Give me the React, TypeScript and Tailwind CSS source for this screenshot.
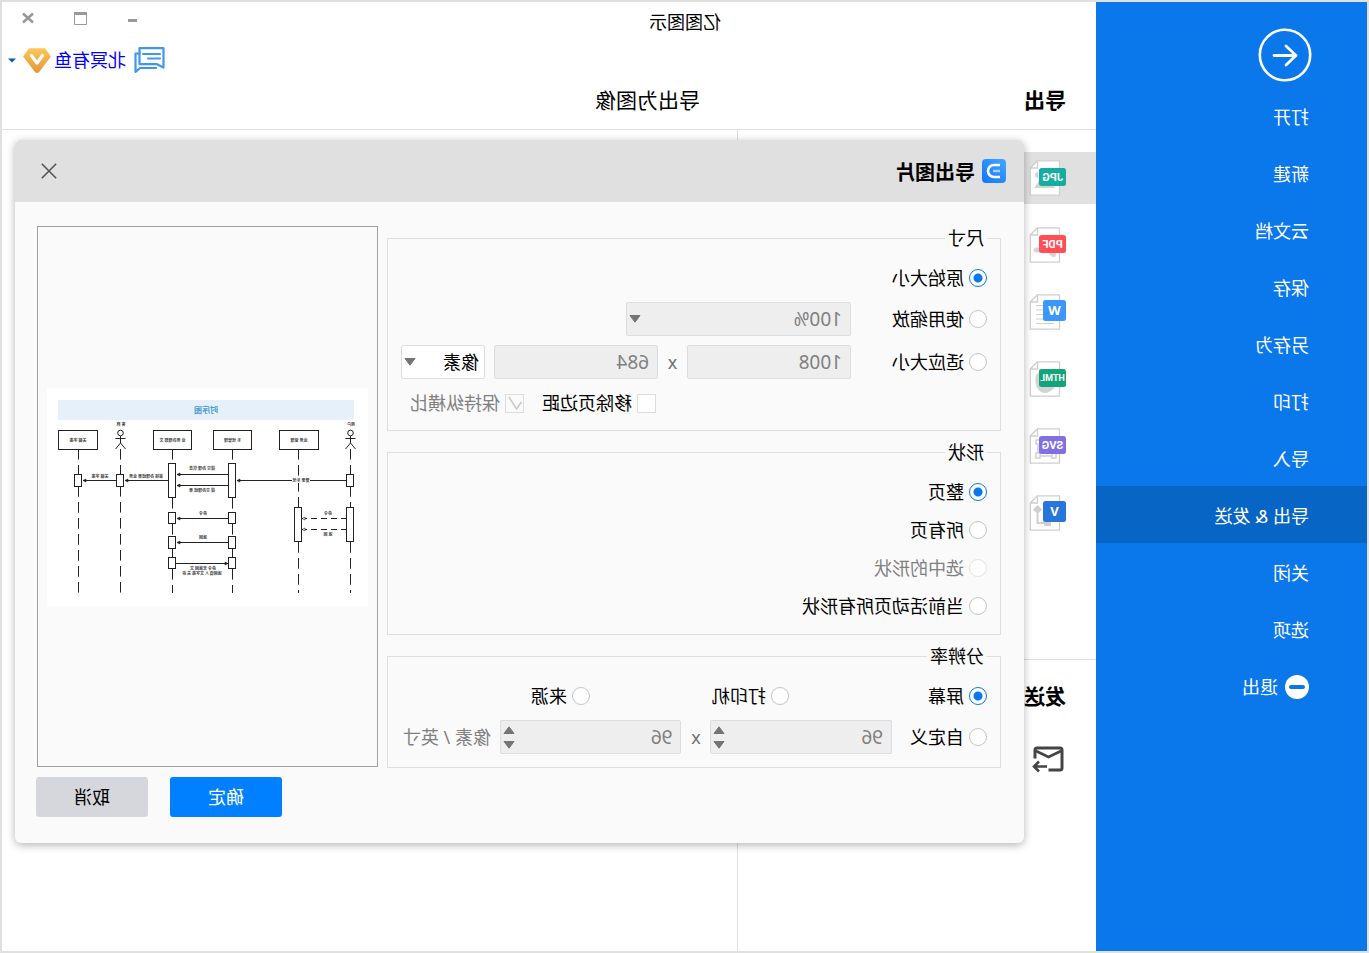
import type { ReactNode } from "react"

const menuItems = ["打开", "新建", "云文档", "保存", "另存为", "打印", "导入", "导出 & 发送", "关闭", "选项"]

interface FormatInfo {
  label: string
  color: string
  wide: boolean
  size: number
}

const formats: FormatInfo[] = [
  { label: "JPG", color: "#13ada1", wide: true, size: 11 },
  { label: "PDF", color: "#ff4e56", wide: true, size: 11 },
  { label: "W", color: "#3b97fb", wide: false, size: 13 },
  { label: "HTML", color: "#11a579", wide: true, size: 9 },
  { label: "SVG", color: "#8170e4", wide: true, size: 11 },
  { label: "V", color: "#2876dc", wide: false, size: 13 },
]

function FormatBackdrop({ label }: { label: string }) {
  switch (label) {
    case "JPG":
      return <path d="M11 28l8-12 4 6 3-3 6 9zM28 12a3 3 0 1 1 0 6z" fill="#d4d4d4" />
    case "PDF":
      return (
        <g fill="#d4d4d4">
          <ellipse cx="29" cy="23" rx="3.500" ry="2.500" />
          <path d="M10 27c0-3 3-5 6-6l2 3c-1 3-3 6-6 6-1 0-2-1-2-3z" />
        </g>
      )
    case "W":
      return <path d="M12 11.500h18M12 16h18M12 20.500h18M12 25h18M12 29.500h18" stroke="#d0d0d0" />
    case "HTML":
      return <path d="M12 22a10 10 0 0 1 18-8c2 8-1 18-9 18-4 0-6-3-9-4z" fill="#d4d4d4" />
    case "SVG":
      return (
        <g fill="none" stroke="#d0d0d0" strokeWidth="1.500">
          <path d="M14 28h12M28 17v9" />
          <rect x="10" y="25" width="4" height="5" fill="#fff" />
          <rect x="26" y="25" width="4" height="5" fill="#fff" />
          <rect x="26" y="12" width="4" height="4" fill="#fff" />
        </g>
      )
    default:
      return <path d="M24 14.500l4.500-4.500 4.500 4.500-4.500 4.500zM27.500 17h2v12h-9v-2h7zM15 25h7v6h-7z" fill="#d0d0d0" />
  }
}

function FormatIcon({ label, color, wide, size }: FormatInfo) {
  return (
    <svg width="37" height="36" viewBox="0 0 37 36" className="block shrink-0">
      <path d="M6.500 .8H28.500l7.200 7.200V35.200H6.500z" fill="#fff" stroke="#d0d0d0" strokeWidth="1.300" strokeLinejoin="round" />
      <path d="M28.500 .8v7.200h7.200" fill="none" stroke="#d0d0d0" strokeWidth="1.300" />
      <FormatBackdrop label={label} />
      <rect x="0" y={wide ? 8 : 6} width={wide ? 27 : 23} height={wide ? 18 : 21} rx="2.500" fill={color} />
      <text
        x={wide ? 13.5 : 11.5}
        y={size === 9 ? 20 : 21}
        textAnchor="middle"
        fontSize={size}
        fontWeight="700"
        fontFamily={wide ? "Roboto, sans-serif" : "'Open Sans', sans-serif"}
        fill="#fff"
      >
        {label}
      </text>
    </svg>
  )
}

function Caret({ up = false }: { up?: boolean }) {
  return (
    <svg width="12" height="8" viewBox="0 0 12 8" className="block">
      <path d={up ? "M1 7.500L6 .8l5 6.700z" : "M1 .5l5 6.700L11 .5z"} fill="#757575" stroke="#757575" strokeLinejoin="round" />
    </svg>
  )
}

interface RadioProps {
  name: string
  children: ReactNode
  checked?: boolean
  disabled?: boolean
  className?: string
}

function Radio({ name, children, checked, disabled, className = "" }: RadioProps) {
  return (
    <label className={`flex h-6 shrink-0 items-center gap-[5px] whitespace-nowrap ${disabled ? "text-[#808080]" : ""} ${className}`}>
      <input
        type="radio"
        name={name}
        defaultChecked={checked}
        disabled={disabled}
        className="size-[18px] appearance-none rounded-full border border-[#c4c4c4] bg-white checked:border-[#0a77eb] checked:bg-[radial-gradient(circle,#0a77eb_4px,#ffffff_5px)] disabled:border-[#e2e2e2]"
      />
      {children}
    </label>
  )
}

function Check({ children, checked, disabled }: { children: ReactNode; checked?: boolean; disabled?: boolean }) {
  return (
    <label className={`flex h-6 items-center gap-[5px] whitespace-nowrap ${disabled ? "text-[#808080]" : ""}`}>
      <span className="relative size-[19px]">
        <input
          type="checkbox"
          defaultChecked={checked}
          disabled={disabled}
          className="block size-[19px] appearance-none border border-[#dcdde0] bg-white disabled:bg-[#fafafa]"
        />
        {checked && (
          <svg width="19" height="19" viewBox="0 0 19 19" className="pointer-events-none absolute inset-0">
            <path d="M2.500 8l5 7L15 3" fill="none" stroke="#c8c8c8" strokeWidth="1.500" />
          </svg>
        )}
      </span>
      {children}
    </label>
  )
}

function Group({ title, children, className = "" }: { title: string; children: ReactNode; className?: string }) {
  return (
    <fieldset className={`min-w-0 border border-[#dedede] px-[13px] ${className}`}>
      <legend className="h-6 px-[3px]">{title}</legend>
      {children}
    </fieldset>
  )
}

const fieldClass =
  "h-[34px] w-full min-w-0 appearance-none rounded-[2px] border border-[#dcdde0] bg-[#eeeeee] pl-2 text-[19px] text-[#808080]"

function Spinner({ label, value }: { label: string; value: string }) {
  return (
    <div className="relative min-w-0 flex-1">
      <input aria-label={label} defaultValue={value} disabled className={fieldClass} />
      <div className="absolute inset-y-0 right-[3px] flex flex-col justify-center gap-[7px]">
        <button type="button" disabled aria-label={`${label} +`}>
          <Caret up />
        </button>
        <button type="button" disabled aria-label={`${label} -`}>
          <Caret />
        </button>
      </div>
    </div>
  )
}

function Times() {
  return <span className="w-[29px] shrink-0 text-center text-[#707070]">x</span>
}

// x and the start/end pairs of every dashed stretch
const lifelines: { x: number; parts: [number, number][] }[] = [
  { x: 17.5, parts: [[61, 88], [98, 120], [154, 205]] },
  { x: 69.5, parts: [[61, 120], [154, 205]] },
  { x: 135.5, parts: [[61, 76], [110, 121], [136, 147], [161, 170], [181, 205]] },
  { x: 195.5, parts: [[61, 76], [110, 121], [136, 147], [161, 170], [181, 205]] },
  { x: 247.5, parts: [[61, 88], [98, 205]] },
  { x: 289.5, parts: [[61, 88], [98, 205]] },
]

const participants = [
  { x: 49, w: 40, text: "业务 受理" },
  { x: 116, w: 39, text: "系 统管理" },
  { x: 176, w: 39, text: "业 务办理部 文" },
  { x: 270, w: 40, text: "关键 字串" },
]

// x, top, height of every activation bar
const bars = [
  [17.5, 86, 13],
  [17.5, 119, 35],
  [69.5, 119, 35],
  [135.5, 75, 35],
  [195.5, 75, 35],
  [135.5, 124, 12],
  [195.5, 124, 12],
  [135.5, 148, 13],
  [195.5, 148, 13],
  [135.5, 169, 12],
  [195.5, 169, 12],
  [247.5, 86, 13],
  [289.5, 86, 13],
]

const messages = [
  { from: 21, to: 131, y: 92.5 },
  { from: 139, to: 191, y: 86.5 },
  { from: 139, to: 191, y: 97.5 },
  { from: 199, to: 243, y: 92.5 },
  { from: 251, to: 285, y: 92.5 },
  { from: 139, to: 191, y: 130.5 },
  { from: 139, to: 191, y: 154.5 },
  { from: 192, to: 140, y: 175.5 },
  { from: 21, to: 66, y: 130.5, dashed: true },
  { from: 21, to: 66, y: 141.5, dashed: true },
]

const notes = [
  { x: 17, y: 38, text: "用户" },
  { x: 247, y: 38, text: "客 商" },
  { x: 67, y: 94, text: "登录 系统" },
  { x: 166, y: 82, text: "提交 办理 信息" },
  { x: 166, y: 104, text: "提 交办理结 果" },
  { x: 222, y: 90, text: "审核 办理结果 业务" },
  { x: 268, y: 90, text: "关键 字串" },
  { x: 165, y: 127, text: "命令" },
  { x: 165, y: 151, text: "返回" },
  { x: 165, y: 182, text: "命令 无返回 文" },
  { x: 166, y: 187, text: "返回值 人 文字串 关 命" },
  { x: 40, y: 127, text: "命令" },
  { x: 40, y: 148, text: "返 回" },
]

function SequencePreview() {
  return (
    <svg viewBox="0 0 321 218" className="block w-full bg-white" fontFamily="'Noto Sans CJK SC', sans-serif">
      <rect x="14" y="12" width="296" height="20" fill="#e6f0fa" />
      <text x="162" y="25" fontSize="8" fontWeight="700" textAnchor="middle" fill="#4a9bd4">
        时序图
      </text>
      {lifelines.map(({ x, parts }) => (
        <path
          key={x}
          d={parts.map(([start, end]) => `M${x} ${start}V${end}`).join("")}
          stroke="#222"
          strokeDasharray="10.600 5.400"
        />
      ))}
      {[17.5, 247.5].map((x) => (
        <g key={x} fill="none" stroke="#222">
          <circle cx={x} cy="45" r="2.800" fill="#fff" />
          <path d={`M${x} 48v7M${x - 5} 50.500h10M${x - 5} 61l5-6 5 6`} />
        </g>
      ))}
      {participants.map((p) => (
        <g key={p.x}>
          <rect x={p.x + 0.5} y="42.500" width={p.w - 1} height="19" fill="#fff" stroke="#222" />
          <text x={p.x + p.w / 2} y="53.500" fontSize="4" fontWeight="700" textAnchor="middle" fill="#444">
            {p.text}
          </text>
        </g>
      ))}
      {messages.map((m, i) => {
        const dir = m.to > m.from ? -1 : 1
        return (
          <g key={i} stroke="#222">
            <path d={`M${m.from} ${m.y}H${m.to}`} strokeDasharray={m.dashed ? "6 4" : undefined} />
            <path d={`M${m.to} ${m.y}l${dir * 3}-1.500v3z`} fill={m.dashed ? "#fff" : "#222"} strokeWidth=".6" />
          </g>
        )
      })}
      {bars.map(([x, y, h]) => (
        <rect key={`${x}-${y}`} x={x - 3} y={y + 0.5} width="7" height={h - 1} fill="#fff" stroke="#222" />
      ))}
      <rect x="58" y="90" width="18" height="5" fill="#fff" />
      {notes.map((n, i) => (
        <text key={i} x={n.x} y={n.y} fontSize="4" fontWeight="700" textAnchor="middle" fill="#444">
          {n.text}
        </text>
      ))}
    </svg>
  )
}

function Sidebar() {
  return (
    <nav className="w-[271px] shrink-0 bg-[#0a77eb] text-white">
      <div className="flex h-[85px] items-start pl-[55px] pt-[26px]">
        <button type="button" aria-label="返回">
          <svg width="54" height="54" viewBox="0 0 54 54" fill="none" stroke="#fff" strokeLinecap="round" strokeLinejoin="round">
            <circle cx="27" cy="27" r="25.200" strokeWidth="2.600" />
            <path d="M38 27.500H16M26 18l-10 9.500L26 37" strokeWidth="2.800" />
          </svg>
        </button>
      </div>
      {menuItems.map((item) => (
        <a
          key={item}
          href="#"
          className={`flex h-[57px] items-center pl-[58px] pt-0.5 ${item === "导出 & 发送" ? "bg-[#0665c5]" : ""}`}
        >
          {item}
        </a>
      ))}
      <a href="#" className="flex h-[57px] items-center gap-[7px] pl-[58px] pt-0.5">
        <svg width="24" height="24" viewBox="0 0 24 24">
          <circle cx="12" cy="12" r="12" fill="#fff" />
          <rect x="4" y="10" width="16" height="4" rx="2" fill="#0a77eb" />
        </svg>
        退出
      </a>
    </nav>
  )
}

function Header() {
  return (
    <header className="border-b border-[#e0e0e0]">
      <div className="grid h-10 grid-cols-[358px_1fr]">
        <span />
        <div className="flex justify-between">
          <h1 className="flex items-center pl-[17px]">亿图图示</h1>
          <div className="flex h-8 items-center gap-10 pr-5">
            <button type="button" aria-label="最小化">
              <svg width="12" height="14" viewBox="0 0 12 14">
                <path d="M2 9.500h9" stroke="#999" strokeWidth="3" />
              </svg>
            </button>
            <button type="button" aria-label="最大化">
              <svg width="13" height="13" viewBox="0 0 13 13">
                <path d="M.5 1v11.500h12V1" fill="none" stroke="#999" />
                <path d="M0 1.500h13" stroke="#999" strokeWidth="3" />
              </svg>
            </button>
            <button type="button" aria-label="关闭">
              <svg width="12" height="12" viewBox="0 0 12 12">
                <path d="M1 1.500l10 9M11 1.500l-10 9" stroke="#999" strokeWidth="2.600" />
              </svg>
            </button>
          </div>
        </div>
      </div>
      <div className="flex h-9 items-center justify-end pr-1.5">
        <button type="button" aria-label="消息" className="mr-2">
          <svg width="31" height="26" viewBox="0 0 31 26" fill="none" stroke="#3e97ee" strokeWidth="2.200" strokeLinejoin="round" strokeLinecap="round">
            <path d="M1.500 1.200H25.500v16H8l-6.500 3.300z" />
            <path d="M25.500 6.500h4V24.800L25 21H9" />
            <path d="M5 7h17M5 11.500h12" strokeWidth="2" />
          </svg>
        </button>
        <a href="#" className="text-[#0000ff]">
          北冥有鱼
        </a>
        <svg width="28" height="25" viewBox="0 0 28 25" className="ml-[3px]">
          <defs>
            <linearGradient id="vip" x1="0" y1="0" x2="0" y2="1">
              <stop offset="0" stopColor="#fbc557" />
              <stop offset="1" stopColor="#e3983a" />
            </linearGradient>
          </defs>
          <path d="M6.500 1h15L27 8.500 15.500 23.500a2 2 0 0 1-3 0L1 8.500z" fill="url(#vip)" stroke="url(#vip)" strokeWidth="1.500" strokeLinejoin="round" />
          <path d="M8.500 7.500L14 15l5.500-7.500" fill="none" stroke="#fff" strokeWidth="3.200" strokeLinecap="round" strokeLinejoin="round" />
        </svg>
        <button type="button" aria-label="账户" className="ml-[7px]">
          <svg width="8" height="5" viewBox="0 0 8 5">
            <path d="M0 .5h8L4 4.500z" fill="#0b5cad" />
          </svg>
        </button>
      </div>
      <div className="grid h-[51px] grid-cols-[358px_1fr] items-center pb-2 text-[21px]">
        <h2 className="pl-[30px] font-bold">导出</h2>
        <h2 className="pl-[38px]">导出为图像</h2>
      </div>
    </header>
  )
}

function FormatPanel() {
  return (
    <div className="w-[359px] border-r border-[#e0e0e0]">
      <div className="flex h-[529px] flex-col gap-[15px] pt-[22px]">
        {formats.map((format, i) => (
          <button
            key={format.label}
            type="button"
            className={`flex h-[52px] w-full shrink-0 items-start pl-[30px] pt-2 ${i === 0 ? "bg-[#e0e0e0]" : ""}`}
          >
            <FormatIcon {...format} />
          </button>
        ))}
      </div>
      <div className="border-t border-[#e0e0e0] px-[30px] pt-[18px]">
        <h2 className="h-9 text-[21px]/9 font-bold">发送</h2>
        <button type="button" aria-label="发送邮件" className="mt-8 block pl-[2px]">
          <svg width="32" height="28" viewBox="0 0 32 28" fill="none" stroke="#444" strokeWidth="3">
            <path d="M29 12.500V4a2 2 0 0 0-2-2H4a2 2 0 0 0-2 2v18a2 2 0 0 0 2 2h11.500" />
            <path d="M3 5l12.500 6L28 5" strokeWidth="2.600" />
            <path d="M17 20.500h12M25 15.500l5 5-5 5" strokeWidth="2.600" />
          </svg>
        </button>
      </div>
    </div>
  )
}

function ExportDialog() {
  return (
    <section
      role="dialog"
      aria-label="导出图片"
      className="absolute left-[72px] right-[13px] top-[138px] overflow-hidden rounded-md bg-[#fafafa] shadow-[0_2px_8px_rgba(0,0,0,0.3)]"
    >
      <div className="flex h-[62px] items-center justify-between bg-[#e0e0e0] pl-[18px] pr-[26px]">
        <div className="flex items-center gap-[7px]">
          <svg width="24" height="24" viewBox="0 0 24 24" fill="none">
            <defs>
              <linearGradient id="brand" x1="0" y1="0" x2="1" y2="1">
                <stop offset="0" stopColor="#41a8ff" />
                <stop offset="1" stopColor="#1273ff" />
              </linearGradient>
            </defs>
            <rect width="24" height="24" rx="4" fill="url(#brand)" />
            <path d="M6 6h6a6 6 0 0 1 0 12H6" stroke="#fff" strokeWidth="2.600" />
            <path d="M6 12h7" stroke="#a5d0ff" strokeWidth="2.400" />
          </svg>
          <h2 className="pt-1 text-xl font-bold">导出图片</h2>
        </div>
        <button type="button" aria-label="关闭">
          <svg width="16" height="16" viewBox="0 0 16 16">
            <path d="M.8 .8l14.400 14.400M15.200 .8L.8 15.200" stroke="#555" strokeWidth="1.600" />
          </svg>
        </button>
      </div>

      <form className="pb-[26px] pl-[23px] pr-[21px] pt-6">
        <div className="flex gap-[9px]">
          <div className="flex min-w-0 flex-1 flex-col gap-[9px]">
            <Group title="尺寸" className="pb-[15px]">
              <Radio name="size" checked className="mt-4">
                原始大小
              </Radio>
              <div className="mt-3 flex items-center">
                <Radio name="size" className="w-[136px]">
                  使用缩放
                </Radio>
                <div className="min-w-0 flex-1">
                  <div className="relative w-1/2">
                    <select aria-label="缩放" disabled className={`${fieldClass} opacity-100`}>
                      <option>100%</option>
                    </select>
                    <span className="pointer-events-none absolute right-[3px] top-[13px]">
                      <Caret />
                    </span>
                  </div>
                </div>
              </div>
              <div className="mt-[9px] flex items-center">
                <Radio name="size" className="w-[136px]">
                  适应大小
                </Radio>
                <div className="min-w-0 flex-1">
                  <input aria-label="宽" defaultValue="1008" disabled className={fieldClass} />
                </div>
                <Times />
                <div className="min-w-0 flex-1">
                  <input aria-label="高" defaultValue="684" disabled className={fieldClass} />
                </div>
                <div className="relative ml-[9px] w-[84px] shrink-0">
                  <select
                    aria-label="单位"
                    className="h-[34px] w-full appearance-none rounded-[2px] border border-[#dcdde0] bg-white pl-[5px]"
                  >
                    <option>像素</option>
                  </select>
                  <span className="pointer-events-none absolute right-[3px] top-[13px]">
                    <Caret />
                  </span>
                </div>
              </div>
              <div className="mt-3 flex justify-end gap-[18px] pr-[9px]">
                <Check>移除页边距</Check>
                <Check checked disabled>
                  保持纵横比
                </Check>
              </div>
            </Group>

            <Group title="形状" className="pb-4">
              <div className="flex flex-col items-start gap-[14px] pt-4">
                <Radio name="shape" checked>
                  整页
                </Radio>
                <Radio name="shape">所有页</Radio>
                <Radio name="shape" disabled>
                  选中的形状
                </Radio>
                <Radio name="shape">当前活动页所有形状</Radio>
              </div>
            </Group>

            <Group title="分辨率" className="pb-[13px]">
              <div className="flex pt-4">
                <Radio name="dpi" checked className="w-[198px]">
                  屏幕
                </Radio>
                <Radio name="dpi" className="w-[199px]">
                  打印机
                </Radio>
                <Radio name="dpi">来源</Radio>
              </div>
              <div className="mt-3 flex items-center">
                <Radio name="dpi" className="w-[95px]">
                  自定义
                </Radio>
                <Spinner label="水平分辨率" value="96" />
                <Times />
                <Spinner label="垂直分辨率" value="96" />
                <span className="ml-[9px] w-[90px] shrink-0 whitespace-nowrap text-[#808080]">像素 / 英寸</span>
              </div>
            </Group>
          </div>

          <div className="mb-px mr-px flex w-[341px] shrink-0 items-center border border-[#a0a0a0] px-[9px]">
            <SequencePreview />
          </div>
        </div>
        <div className="mt-[9px] flex justify-end gap-[22px]">
          <button type="button" className="h-10 w-28 rounded-[3px] bg-[#0080ff] text-white">
            确定
          </button>
          <button type="button" className="h-10 w-28 rounded-[3px] bg-[#d5d7dc]">
            取消
          </button>
        </div>
      </form>
    </section>
  )
}

export default function App() {
  return (
    <div className="flex min-h-screen -scale-x-100 border-2 border-[#e0e0e0] bg-white font-['Noto_Sans','Noto_Sans_CJK_SC',sans-serif] text-lg/6 text-black">
      <Sidebar />
      <main className="relative flex min-w-0 flex-1 flex-col">
        <Header />
        <div className="flex flex-1">
          <FormatPanel />
        </div>
        <ExportDialog />
      </main>
    </div>
  )
}
